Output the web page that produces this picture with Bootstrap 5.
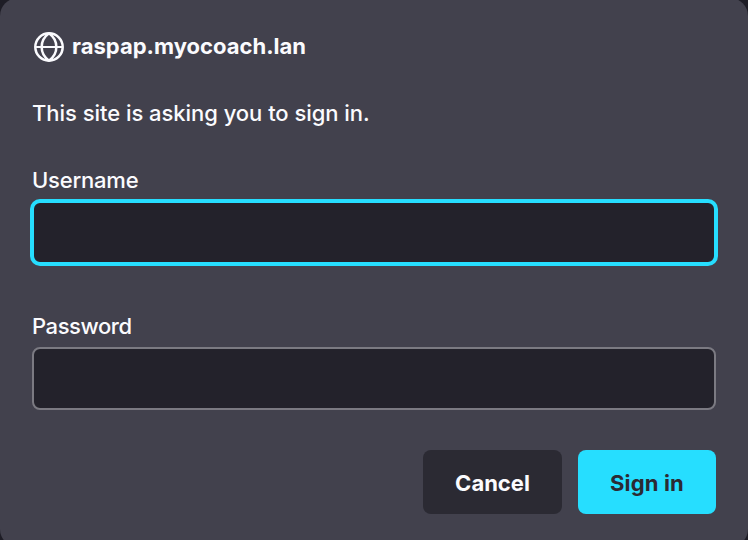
<!DOCTYPE html>
<html lang="en">
<head>
<meta charset="utf-8">
<meta name="viewport" content="width=device-width, initial-scale=1">
<title>Sign in</title>
<link href="https://cdn.jsdelivr.net/npm/bootstrap@5.3.0/dist/css/bootstrap.min.css" rel="stylesheet">
<style>
  body { background: #1e1d26; color: #fbfbfe; font: 450 22px/32px Inter, "Liberation Sans", sans-serif; height: 540px; }
  .auth-dialog { background: #42414d; height: 549px; margin-top: -2px; padding: 34px 32px 0; border-radius: 18px; }
  .auth-host { font-weight: 700; letter-spacing: .02px; height: 30px; line-height: 28px; }
  .host-name { margin-top: -2px; }
  .auth-message { margin-top: 35px; letter-spacing: -.04px; }
  .auth-user { margin-top: 35px; }
  .auth-pass { margin-top: 46px; }
  .auth-user .form-label { letter-spacing: -.2px; }
  .auth-pass .form-label { letter-spacing: -.42px; }
  .auth-dialog .form-label { margin-bottom: 5px; line-height: 32px; }
  .auth-dialog .form-control { height: 63px; background: #23222b; border: 2px solid #7b7a82; border-radius: 8px; color: #fbfbfe; font-size: 22px; box-shadow: none; }
  .auth-dialog .form-control.focused { border-color: #26deff; box-shadow: 0 0 0 2px #26deff; }
  .auth-actions { margin-top: 40px; }
  .auth-actions .btn { height: 64px; border: 0; border-radius: 8px; font-size: 22px; font-weight: 650; padding: 2px 0 0; }
  .auth-cancel, .auth-cancel:hover { width: 139px; background: #2b2a33; color: #fbfbfe; }
  .auth-submit, .auth-submit:hover { width: 138px; background: #26deff; color: #2b2a33; letter-spacing: .15px; }
</style>
</head>
<body class="overflow-hidden">
<form class="auth-dialog d-flex flex-column">
  <div class="auth-host d-flex align-items-center">
    <svg class="flex-shrink-0 me-2" width="32" height="30" viewBox="0 0 32 30" fill="none" stroke="#fbfbfe" stroke-width="2.5" aria-hidden="true">
      <circle cx="17" cy="15" r="13.7"/>
      <path d="M17 1.3C7.2 8.5 7.2 21.5 17 28.7M17 1.3C26.8 8.5 26.8 21.5 17 28.7"/>
      <path d="M3 15h28" stroke-width="2"/>
    </svg>
    <span class="host-name">raspap.myocoach.lan</span>
  </div>
  <div class="auth-message"><span>This site is asking you to sign in.</span></div>
  <div class="auth-user d-flex flex-column">
    <label class="form-label" for="username"><span>Username</span></label>
    <input class="form-control focused" id="username" type="text">
  </div>
  <div class="auth-pass d-flex flex-column">
    <label class="form-label" for="password"><span>Password</span></label>
    <input class="form-control" id="password" type="password">
  </div>
  <div class="auth-actions d-flex justify-content-end gap-3">
    <button class="btn auth-cancel" type="button">Cancel</button>
    <button class="btn auth-submit" type="button">Sign in</button>
  </div>
</form>
<script src="https://cdn.jsdelivr.net/npm/bootstrap@5.3.0/dist/js/bootstrap.bundle.min.js"></script>
</body>
</html>
